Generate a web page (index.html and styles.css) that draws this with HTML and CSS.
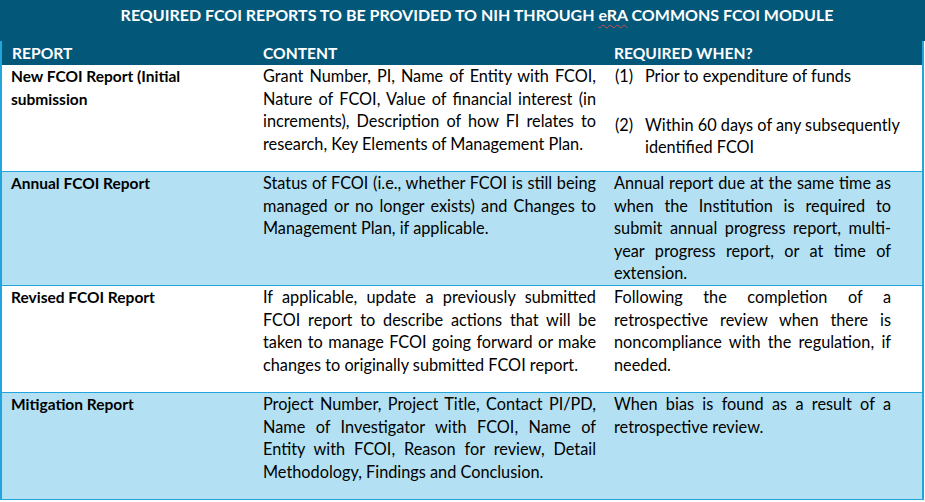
FILE: index.html
```html
<!DOCTYPE html>
<html lang="en">
<head>
<meta charset="utf-8">
<title>Required FCOI Reports</title>
<link rel="stylesheet" href="styles.css">
</head>
<body>
<div class="sheet">
  <div class="title">REQUIRED FCOI REPORTS TO BE PROVIDED TO NIH THROUGH <span class="spell">eRA</span> COMMONS FCOI MODULE</div>
  <table class="fcoi">
    <colgroup>
      <col class="c1"><col class="c2"><col class="c3">
    </colgroup>
    <thead>
      <tr>
        <th class="h1">REPORT</th>
        <th class="h2">CONTENT</th>
        <th class="h3">REQUIRED WHEN?</th>
      </tr>
    </thead>
    <tbody>
      <tr class="white">
        <td class="d1"><b>New FCOI Report (Initial<br>submission</b></td>
        <td class="d2">
          <span class="ln">Grant Number, PI, Name of Entity with FCOI,</span>
          <span class="ln">Nature of FCOI, Value of financial interest (in</span>
          <span class="ln">increments), Description of how FI relates to</span>
          <span class="end">research, Key Elements of Management Plan.</span>
        </td>
        <td class="d3 first">
          <div class="item"><span class="num">(1)</span><span class="txt">Prior to expenditure of funds</span></div>
          <div class="item"><span class="num">(2)</span><span class="txt"><span class="end">Within 60 days of any subsequently</span><span class="end">identified FCOI</span></span></div>
        </td>
      </tr>
      <tr class="blue">
        <td class="d1"><b>Annual FCOI Report</b></td>
        <td class="d2">
          <span class="ln">Status of FCOI (i.e., whether FCOI is still being</span>
          <span class="ln">managed or no longer exists) and Changes to</span>
          <span class="end">Management Plan, if applicable.</span>
        </td>
        <td class="d3 tight">
          <span class="ln">Annual report due at the same time as</span>
          <span class="ln">when the Institution is required to</span>
          <span class="ln">submit annual progress report, multi-</span>
          <span class="ln">year progress report, or at time of</span>
          <span class="end">extension.</span>
        </td>
      </tr>
      <tr class="white">
        <td class="d1"><b>Revised FCOI Report</b></td>
        <td class="d2">
          <span class="ln">If applicable, update a previously submitted</span>
          <span class="ln">FCOI report to describe actions that will be</span>
          <span class="ln">taken to manage FCOI going forward or make</span>
          <span class="end">changes to originally submitted FCOI report.</span>
        </td>
        <td class="d3">
          <span class="ln">Following the completion of a</span>
          <span class="ln">retrospective review when there is</span>
          <span class="ln">noncompliance with the regulation, if</span>
          <span class="end">needed.</span>
        </td>
      </tr>
      <tr class="blue">
        <td class="d1"><b>Mitigation Report</b></td>
        <td class="d2">
          <span class="ln">Project Number, Project Title, Contact PI/PD,</span>
          <span class="ln">Name of Investigator with FCOI, Name of</span>
          <span class="ln">Entity with FCOI, Reason for review, Detail</span>
          <span class="end">Methodology, Findings and Conclusion.</span>
        </td>
        <td class="d3">
          <span class="ln">When bias is found as a result of a</span>
          <span class="end">retrospective review.</span>
        </td>
      </tr>
    </tbody>
  </table>
</div>
</body>
</html>
```

FILE: styles.css
```css
html, body {
  margin: 0;
  padding: 0;
  background: #ffffff;
}

body {
  font-family: Lato, "Open Sans", "Liberation Sans", sans-serif;
  color: #000000;
  font-size: 16.3px;
}

.sheet {
  width: 925px;
}

.title {
  background: #03587a;
  color: #ffffff;
  font-weight: 700;
  font-size: 16px;
  height: 41px;
  box-sizing: border-box;
  padding: 4px 0 0 29px;
  line-height: 22px;
  text-align: center;
  white-space: nowrap;
}

.spell {
  text-decoration: underline wavy #d44a4a;
  text-decoration-thickness: 1px;
  text-underline-offset: 3px;
}

.fcoi {
  width: 922px;
  border-collapse: collapse;
  table-layout: fixed;
}

.c1 { width: 251px; }
.c2 { width: 352px; }
.c3 { width: 319px; }

.fcoi th {
  background: #03587a;
  color: #ffffff;
  font-weight: 700;
  font-size: 15.6px;
  text-align: left;
  height: 24px;
  line-height: 24px;
  padding: 0 0 0 10px;
  vertical-align: bottom;
  border-left: 2px solid #21a5dc;
  border-right: 2px solid #21a5dc;
  border-top: 0;
}

.fcoi th.h2 { padding-left: 11px; }
.fcoi th.h1, .fcoi th.h2 { border-right: 0; }
.fcoi th.h2, .fcoi th.h3 { border-left: 0; }

.fcoi td {
  vertical-align: top;
  line-height: 22.5px;
  padding: 0 0 16px 10px;
  border-bottom: 1.5px solid #21a5dc;
}

.fcoi td.d1 {
  border-left: 2px solid #21a5dc;
  padding-left: 9px;
  font-size: 15.5px;
}

.fcoi td.d2 {
  padding-left: 11px;
  padding-right: 8px;
}

.fcoi td.d3 {
  padding-left: 10px;
  padding-right: 31px;
  border-right: 2px solid #21a5dc;
}

.fcoi td.tight { padding-bottom: 0.5px; }
.fcoi td.first { padding-bottom: 12.5px; }

tr.blue td { background: #b4e0f3; }
tr.white td { background: #ffffff; }

.ln {
  display: block;
  text-align: justify;
  text-align-last: justify;
  white-space: nowrap;
}

.end {
  display: block;
  text-align: left;
  white-space: nowrap;
}

.item {
  display: flex;
}

.item + .item {
  margin-top: 26px;
}

.num {
  flex: 0 0 30px;
  margin-left: 1px;
}

.txt {
  flex: 1;
  min-width: 0;
}
```
